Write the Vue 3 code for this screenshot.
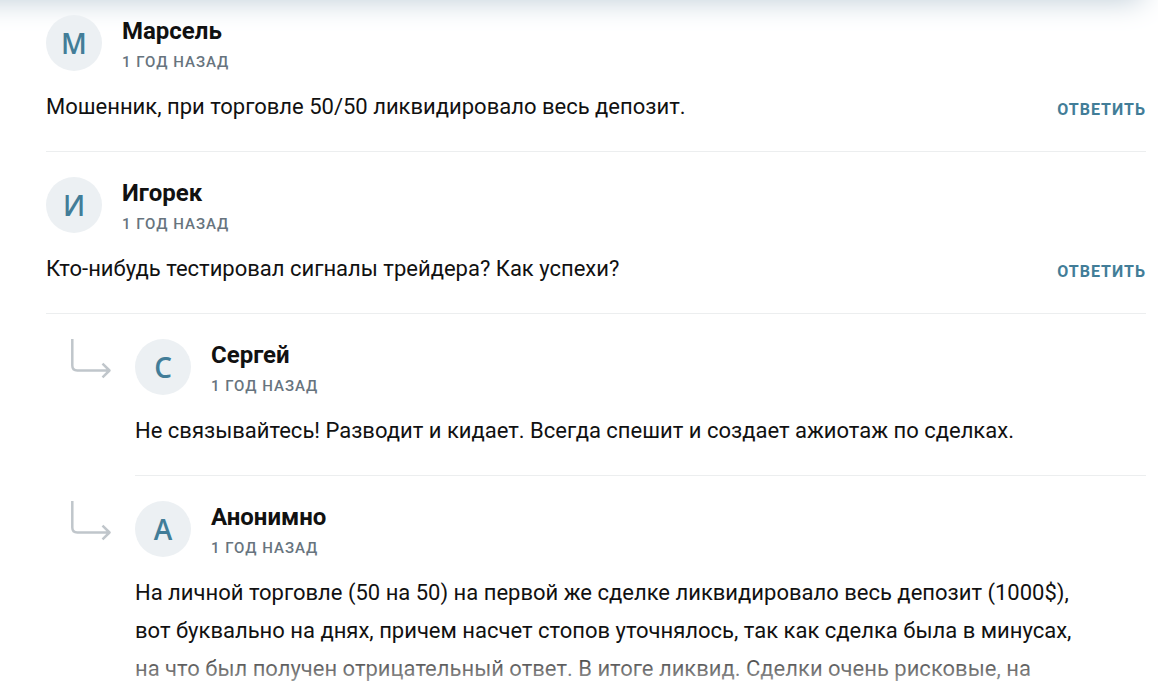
<script setup>
const comments = [
  { id: 1, name: 'Марсель', reply: false, text: 'Мошенник, при торговле 50/50 ликвидировало весь депозит.' },
  { id: 2, name: 'Игорек', reply: false, text: 'Кто-нибудь тестировал сигналы трейдера? Как успехи?' },
  { id: 3, name: 'Сергей', reply: true, text: 'Не связывайтесь! Разводит и кидает. Всегда спешит и создает ажиотаж по сделках.' },
  {
    id: 4,
    name: 'Анонимно',
    reply: true,
    text: 'На личной торговле (50 на 50) на первой же сделке ликвидировало весь депозит (1000$), вот буквально на днях, причем насчет стопов уточнялось, так как сделка была в минусах, на что был получен отрицательный ответ. В итоге ликвид. Сделки очень рисковые, на',
  },
]
</script>

<template>
  <main class="comments">
    <div class="top-shadow"></div>
    <div v-for="c in comments" :key="c.id" class="row">
      <svg v-if="c.reply" class="arrow" viewBox="0 0 42 40" fill="none" aria-hidden="true">
        <path d="M1.3 0V26.5Q1.3 31.5 6.3 31.5H38.5M31.5 24.7L38.5 31.5L31.5 38.3" />
      </svg>
      <article class="comment">
        <header class="head">
          <div class="avatar">{{ c.name[0] }}</div>
          <div class="meta">
            <h3 class="name">{{ c.name }}</h3>
            <time class="date">1 год назад</time>
          </div>
        </header>
        <div class="body">
          <p class="text">{{ c.text }}</p>
          <button v-if="!c.reply" type="button" class="answer">Ответить</button>
        </div>
      </article>
    </div>
    <div class="fade"></div>
  </main>
</template>

<style>
body {
  background: #fff;
}
</style>

<style scoped>
.comments {
  position: relative;
  box-sizing: border-box;
  height: 100vh;
  overflow: hidden;
  padding: 0 12px 0 46px;
  color: #111;
  font-family: Roboto, "Liberation Sans", sans-serif;
}
.top-shadow {
  position: absolute;
  top: -40px;
  left: -40px;
  right: 16px;
  height: 40px;
  box-shadow: 0 0 30px #bccbd6;
}
.row {
  display: flex;
}
.arrow {
  flex: none;
  width: 42px;
  height: 40px;
  margin: 25px 22px 0 25px;
  stroke: #c0c6cb;
  stroke-width: 2.5;
  stroke-linejoin: round;
}
.comment {
  flex: 1;
  min-width: 0;
  padding: 25px 0;
  border-bottom: 1px solid #eceeef;
}
.top-shadow + .row .comment {
  padding-top: 15px;
}
.head {
  display: flex;
  gap: 20px;
  position: relative;
}
.avatar {
  display: flex;
  align-items: center;
  justify-content: center;
  width: 56px;
  height: 56px;
  border-radius: 50%;
  background: #ecf0f3;
  color: #427d98;
  font: 600 28px/54px "Open Sans", "Noto Sans", sans-serif;
}
.name {
  margin: 0;
  font-size: 24px;
  font-weight: 700;
  line-height: 32px;
}
.date {
  display: block;
  color: #67747e;
  font-size: 15px;
  font-weight: 500;
  line-height: 30px;
  letter-spacing: 1px;
  text-transform: uppercase;
}
.body {
  display: flex;
  align-items: flex-end;
  justify-content: space-between;
  gap: 20px;
  margin-top: 11px;
}
.text {
  margin: 0;
  font-size: 22px;
  line-height: 38px;
}
.arrow + .comment .text {
  padding-right: 50px;
}
.answer {
  padding: 0;
  border: 0;
  background: none;
  color: #427d98;
  font: 700 16px/32px Roboto, "Liberation Sans", sans-serif;
  letter-spacing: 1px;
  text-transform: uppercase;
  cursor: pointer;
}
.fade {
  position: absolute;
  right: 0;
  bottom: -30px;
  left: 0;
  height: 70px;
  background: linear-gradient(rgba(255, 255, 255, 0), #fff);
  pointer-events: none;
}
</style>
